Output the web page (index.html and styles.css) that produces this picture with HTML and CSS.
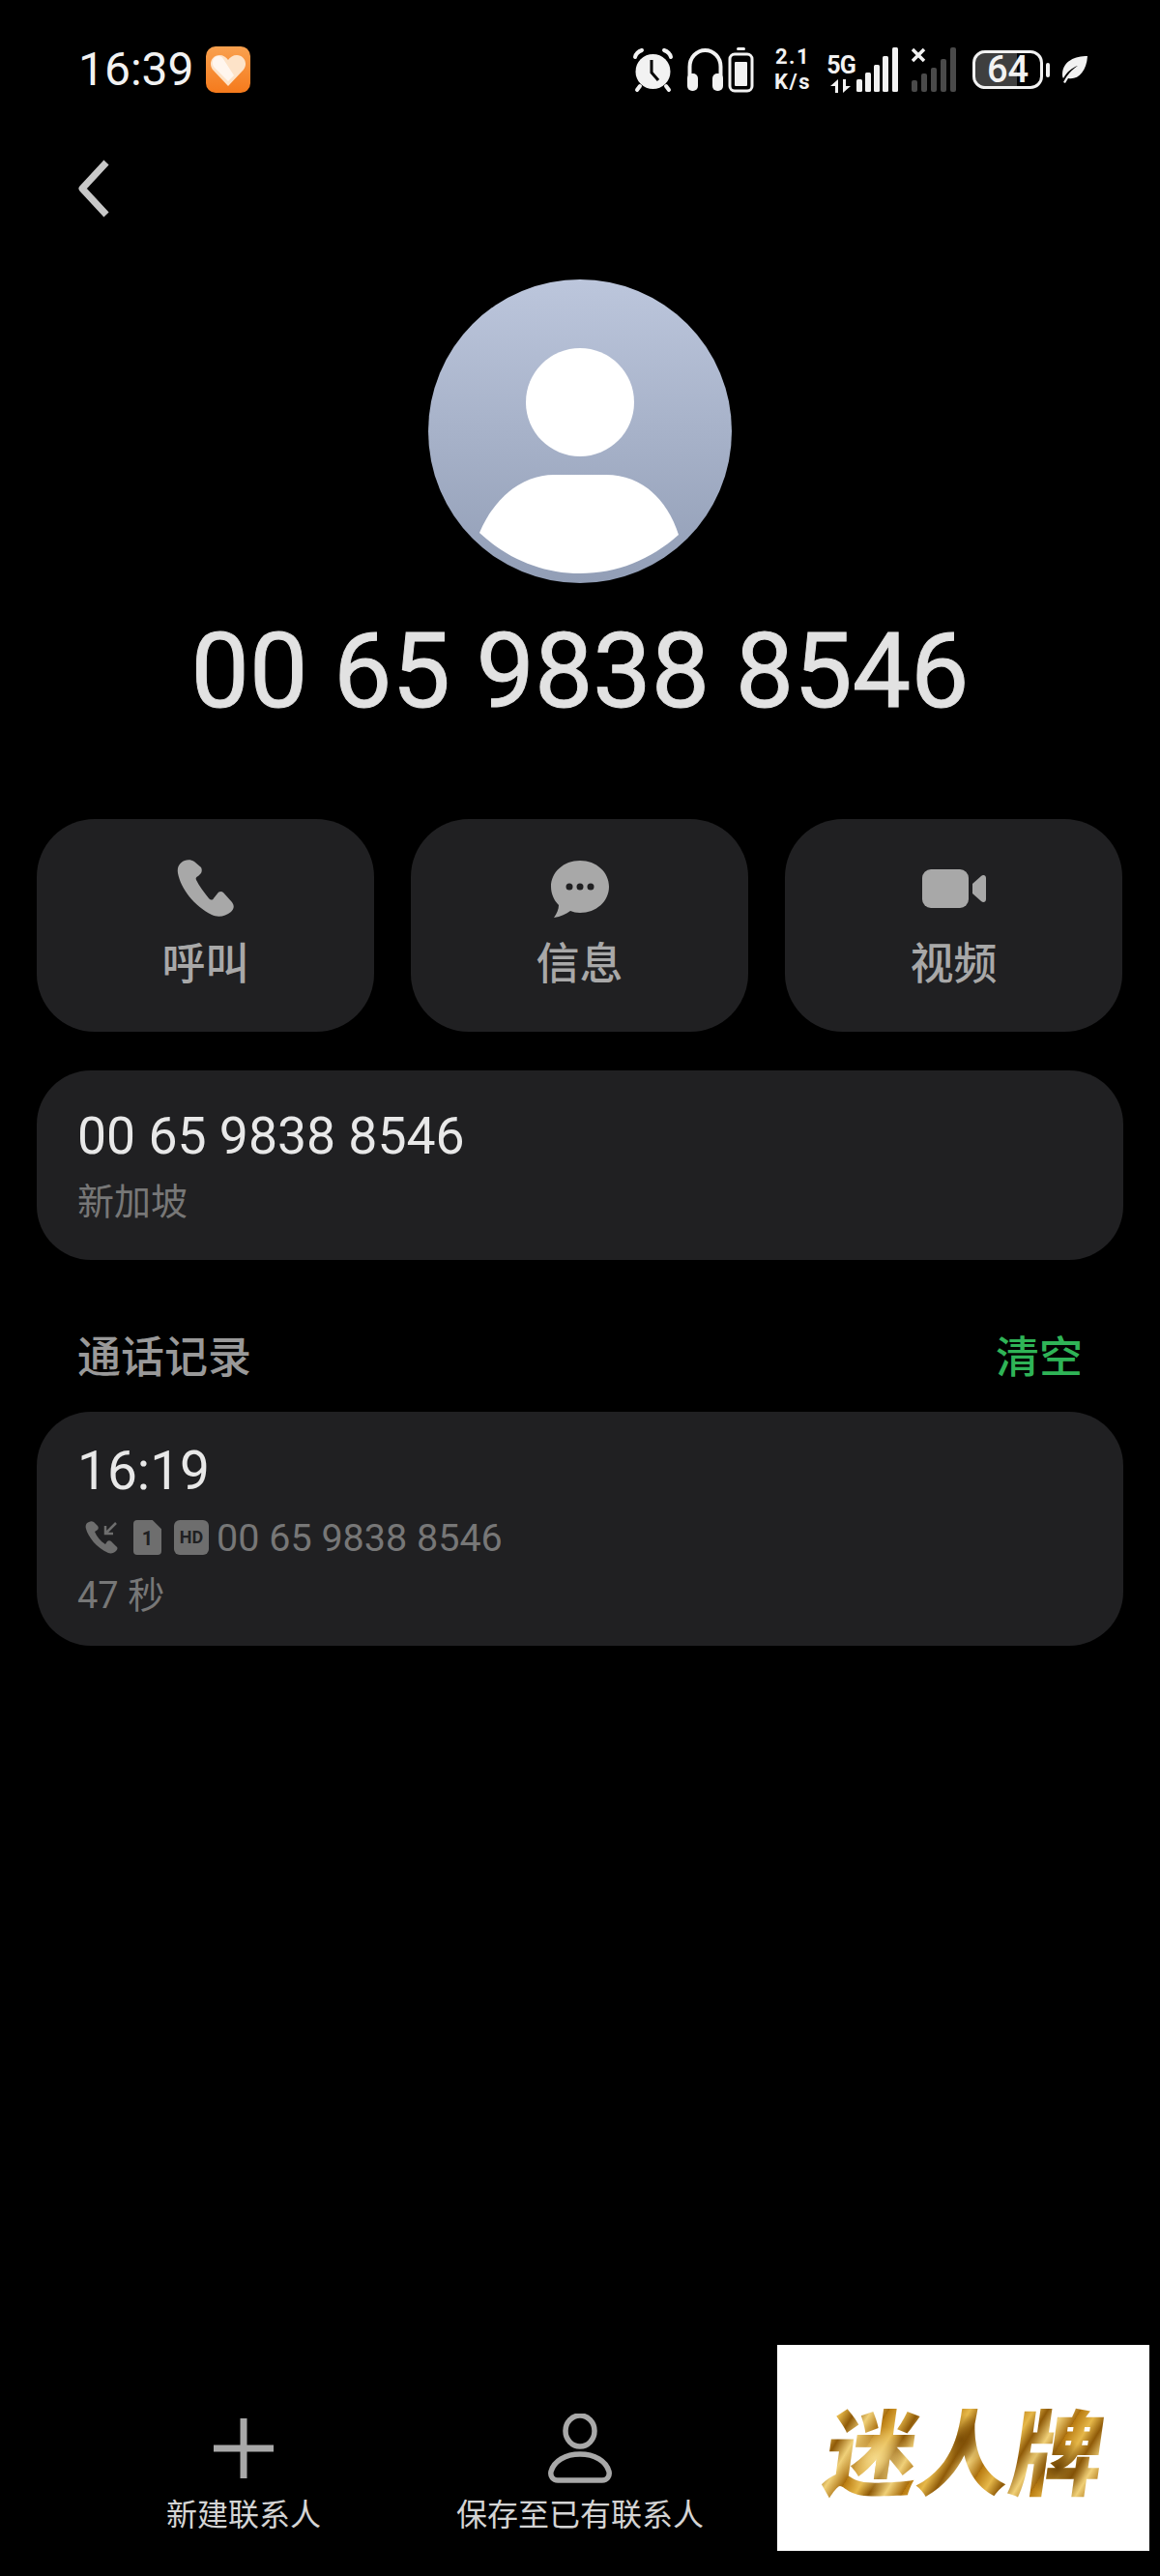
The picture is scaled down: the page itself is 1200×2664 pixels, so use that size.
FILE: index.html
```html
<!DOCTYPE html>
<html lang="zh-CN">
<head>
    <meta charset="UTF-8">
    <meta name="viewport" content="width=device-width, initial-scale=1.0">
    <title>通话详情</title>
    <link rel="stylesheet" href="styles.css">
</head>
<body>
    <div class="screen">

        <!-- Status bar -->
        <div class="status-bar">
            <div class="status-left">
                <span class="clock">16:39</span>
                <svg class="health-icon" width="46" height="48" viewBox="0 0 46 48">
                    <defs>
                        <linearGradient id="healthBg" x1="0" y1="0" x2="0" y2="1">
                            <stop offset="0" stop-color="#f9a14f"/>
                            <stop offset="1" stop-color="#f57a1c"/>
                        </linearGradient>
                    </defs>
                    <rect width="46" height="48" rx="10" fill="url(#healthBg)"/>
                    <path d="M23 41 L7 24 C2 17 7 9 14 9 C18 9 21 11 23 14 C25 11 28 9 32 9 C39 9 44 17 39 24 Z" fill="#fde3c8"/>
                    <path d="M13 10 C8 10 5 16 8 21 L23 36 L29 30 L18 13 C17 11 15 10 13 10 Z" fill="#fff6ee"/>
                </svg>
            </div>
            <div class="status-right">
                <svg class="ic-alarm" width="43" height="47" viewBox="0 0 43 47">
                    <path d="M3 10 C4 6 7 4 10 3 M40 10 C39 6 36 4 33 3" fill="none" stroke="#f2f2f2" stroke-width="4" stroke-linecap="round"/>
                    <circle cx="21.5" cy="25" r="18" fill="#f2f2f2"/>
                    <path d="M20 13 V26 L27 34" fill="none" stroke="#000" stroke-width="3"/>
                    <path d="M8 40 L5 44 M35 40 L38 44" stroke="#f2f2f2" stroke-width="4" stroke-linecap="round"/>
                </svg>
                <svg class="ic-phones" width="39" height="47" viewBox="0 0 39 47">
                    <path d="M3.5 32 V20 a16 17 0 0 1 32 0 V32" fill="none" stroke="#f2f2f2" stroke-width="4"/>
                    <rect x="1" y="27" width="11" height="18" rx="5" fill="#f2f2f2"/>
                    <rect x="27" y="27" width="11" height="18" rx="5" fill="#f2f2f2"/>
                </svg>
                <svg class="ic-cell" width="27" height="47" viewBox="0 0 27 47">
                    <rect x="9" y="0" width="9" height="3" rx="1.5" fill="#f2f2f2"/>
                    <rect x="2" y="7" width="23" height="38" rx="5" fill="none" stroke="#f2f2f2" stroke-width="3"/>
                    <rect x="7" y="15" width="13" height="25" rx="1" fill="#f2f2f2"/>
                </svg>
                <div class="net-speed"><div>2.1</div><div>K/s</div></div>
                <div class="sim-one">
                    <div class="sim-type">
                        <div>5G</div>
                        <svg width="22" height="14" viewBox="0 0 22 14">
                            <path d="M8 0 V14 H5 V7 H0 Z M13 14 V0 H16 V7 H21 Z" fill="#f2f2f2"/>
                        </svg>
                    </div>
                    <svg width="44" height="47" viewBox="0 0 44 47">
                        <rect x="0" y="33" width="6" height="13" rx="1.5" fill="#f2f2f2"/>
                        <rect x="9" y="26" width="6" height="20" rx="1.5" fill="#f2f2f2"/>
                        <rect x="18" y="18" width="6" height="28" rx="1.5" fill="#f2f2f2"/>
                        <rect x="27" y="9" width="6" height="37" rx="1.5" fill="#f2f2f2"/>
                        <rect x="37" y="0" width="6" height="46" rx="1.5" fill="#f2f2f2"/>
                    </svg>
                </div>
                <svg class="ic-sim-two" width="47" height="47" viewBox="0 0 47 47">
                    <path d="M1 2 L13 14 M13 2 L1 14" stroke="#f2f2f2" stroke-width="3.5"/>
                    <rect x="0" y="34" width="6" height="12" rx="2" fill="#4a4a4a"/>
                    <rect x="10" y="27" width="6" height="19" rx="2" fill="#4a4a4a"/>
                    <rect x="20" y="21" width="6" height="25" rx="2" fill="#4a4a4a"/>
                    <rect x="30" y="12" width="6" height="34" rx="2" fill="#4a4a4a"/>
                    <rect x="40" y="0" width="6" height="46" rx="2" fill="#4a4a4a"/>
                </svg>
                <div class="battery">
                    <div class="battery-body">64</div>
                    <div class="battery-nub"></div>
                </div>
                <svg class="ic-leaf" width="28" height="30" viewBox="0 0 28 30">
                    <path d="M28 1 C15 1 3 6 2 19 C2 21 2 23 3 24 C7 17 12 13 18 11 C12 15 7 20 3 28 L5 29 C6 27 7 26 8 24 C18 26 27 17 28 1 Z" fill="#f2f2f2"/>
                </svg>
            </div>
        </div>

        <!-- Back arrow -->
        <svg class="back" width="34" height="60" viewBox="0 0 34 60">
            <path d="M30 3 L5 30 L30 57" fill="none" stroke="#c8c8c8" stroke-width="7" stroke-linejoin="round"/>
        </svg>

        <!-- Avatar and number -->
        <svg class="avatar" width="314" height="314" viewBox="0 0 314 314">
            <defs>
                <linearGradient id="avatarBg" x1="0" y1="0" x2="0" y2="1">
                    <stop offset="0" stop-color="#bcc6dc"/>
                    <stop offset="1" stop-color="#929eb6"/>
                </linearGradient>
            </defs>
            <circle cx="157" cy="157" r="157" fill="url(#avatarBg)"/>
            <circle cx="157" cy="127" r="56" fill="#fff"/>
            <path d="M53 262 C70 222 100 202 130 202 H184 C218 202 246 224 259 264 C230 290 195 304 157 304 C118 304 82 289 53 262 Z" fill="#fff"/>
        </svg>
        <h1 class="caller">00 65 9838 8546</h1>

        <!-- Call, message, video -->
        <div class="actions">
            <div class="action-card">
                <svg width="60" height="60" viewBox="0 0 60 60">
                    <path d="M8 1 C3 3 0 7 1 14 C4 30 18 48 36 57 C42 60 50 59 56 54 C60 50 59 47 57 44 L48 34 C46 32 43 33 42 35 L38 40 C37 42 35 42 33 40 C28 34 23 27 20 21 C19 19 20 18 22 17 L25 14 C26 12 26 10 25 8 L18 2 C15 0 11 0 8 1 Z" fill="#a8a8a8"/>
                </svg>
                <span>呼叫</span>
            </div>
            <div class="action-card">
                <svg width="62" height="60" viewBox="0 0 62 60">
                    <path d="M31 1 C48 1 61 13 61 28 C61 43 48 55 31 55 C27 55 24 54 21 53 C17 56 11 59 4 60 C7 56 9 51 9 47 C4 42 1 35 1 28 C1 13 14 1 31 1 Z" fill="#a8a8a8"/>
                    <circle cx="20" cy="28" r="3.5" fill="#202022"/>
                    <circle cx="31" cy="28" r="3.5" fill="#202022"/>
                    <circle cx="42" cy="28" r="3.5" fill="#202022"/>
                </svg>
                <span>信息</span>
            </div>
            <div class="action-card">
                <svg width="66" height="60" viewBox="0 0 66 60">
                    <rect x="0" y="10" width="48" height="40" rx="9" fill="#a8a8a8"/>
                    <path d="M52 25 L61 17 C63 15 66 16 66 19 V41 C66 44 63 45 61 43 L52 35 Z" fill="#a8a8a8"/>
                </svg>
                <span>视频</span>
            </div>
        </div>

        <!-- Number card -->
        <div class="card number-card">
            <div class="number">00 65 9838 8546</div>
            <div class="region">新加坡</div>
        </div>

        <!-- Call log -->
        <div class="log-header">
            <span class="log-title">通话记录</span>
            <span class="log-clear">清空</span>
        </div>
        <div class="card log-card">
            <div class="log-time">16:19</div>
            <div class="log-detail">
                <svg width="36" height="36" viewBox="0 0 36 36">
                    <path d="M4 2 C1 3 0 6 1 9 C3 17 12 29 24 34 C27 35 30 34 32 32 C34 30 34 28 32 27 L27 22 C26 21 24 21 23 22 L21 25 C16 22 12 17 10 12 L13 10 C14 9 14 7 13 6 L9 2 C7 1 6 1 4 2 Z" fill="#6e6e6e"/>
                    <path d="M32 3 L21 14 M21 6 V14 H29" fill="none" stroke="#6e6e6e" stroke-width="2.5"/>
                </svg>
                <div class="sim-badge">1</div>
                <div class="hd-badge">HD</div>
                <span class="log-number">00 65 9838 8546</span>
            </div>
            <div class="log-length">47 秒</div>
        </div>

        <!-- Bottom actions -->
        <div class="bottom-bar">
            <div class="bottom-item">
                <svg width="62" height="72" viewBox="0 0 62 72">
                    <path d="M31 5 V67 M0 36 H62" stroke="#a8a8a8" stroke-width="7"/>
                </svg>
                <span>新建联系人</span>
            </div>
            <div class="bottom-item">
                <svg width="66" height="72" viewBox="0 0 66 72">
                    <ellipse cx="33" cy="18" rx="15" ry="16" fill="none" stroke="#a8a8a8" stroke-width="5.5"/>
                    <path d="M10 69 H56 C61 69 64 65 63 60 C60 49 48 42 33 42 C18 42 6 49 3 60 C2 65 5 69 10 69 Z" fill="none" stroke="#a8a8a8" stroke-width="5.5"/>
                </svg>
                <span>保存至已有联系人</span>
            </div>
        </div>

        <!-- Watermark stuck over the third bottom action -->
        <div class="watermark"><span class="gold-text">迷人牌</span></div>
    </div>
</body>
</html>
```

FILE: styles.css
```css
/* Basic Reset */
* {
    margin: 0;
    padding: 0;
    box-sizing: border-box;
}

body {
    background-color: #000;
    font-family: 'Roboto', 'Noto Sans CJK SC', sans-serif;
}

.screen {
    position: relative;
    width: 1200px;
    height: 2664px;
    display: flex;
    flex-direction: column;
    overflow: hidden;
}

/* Status bar */
.status-bar {
    display: flex;
    justify-content: space-between;
    align-items: center;
    height: 48px;
    margin-top: 48px;
    padding: 0 75px 0 81px;
    color: #f2f2f2;
}

.status-left {
    display: flex;
    align-items: center;
    gap: 12px;
}

.clock {
    font-size: 48px;
    line-height: 48px;
}

.status-right {
    display: flex;
    align-items: center;
}

.ic-phones {
    margin-left: 13px;
}

.ic-cell {
    margin-left: 4px;
}

.net-speed {
    display: flex;
    flex-direction: column;
    align-items: center;
    width: 46px;
    margin-left: 17px;
    font-size: 22px;
    font-weight: 700;
    letter-spacing: 1.5px;
    line-height: 26px;
}

.sim-one {
    display: flex;
    gap: 3px;
    margin-left: 14px;
    align-items: flex-end;
}

.sim-type {
    display: flex;
    flex-direction: column;
    align-items: center;
    width: 26px;
    font-size: 25px;
    font-weight: 700;
    line-height: 28px;
    letter-spacing: -1px;
}

.ic-sim-two {
    margin-left: 13px;
}

.battery {
    display: flex;
    align-items: center;
    gap: 3px;
    margin-left: 16px;
}

.battery-body {
    width: 73px;
    height: 40px;
    border: 3px solid #f2f2f2;
    border-radius: 13px;
    background: linear-gradient(90deg, #3f3f3f 64%, #000 64%);
    background-clip: padding-box;
    font-size: 38px;
    font-weight: 500;
    line-height: 34px;
    text-align: center;
}

.battery-nub {
    width: 4px;
    height: 15px;
    border-radius: 2px;
    background-color: #f2f2f2;
}

.ic-leaf {
    margin-left: 11px;
}

/* Back and header */
.back {
    margin: 69px 0 0 80px;
    flex-shrink: 0;
}

.avatar {
    margin: 64px auto 0;
    flex-shrink: 0;
}

.caller {
    margin-top: 36px;
    font-size: 107.5px;
    font-weight: 400;
    -webkit-text-stroke: 1px #e2e2e2;
    line-height: 110px;
    text-align: center;
    color: #e2e2e2;
}

/* Action cards */
.actions {
    display: grid;
    grid-template-columns: repeat(3, 349px);
    column-gap: 38px;
    margin: 98px 38px 0;
}

.action-card {
    height: 220px;
    padding-top: 42px;
    display: flex;
    flex-direction: column;
    align-items: center;
    gap: 19px;
    background-color: #202022;
    border-radius: 60px;
    color: #a8a8a8;
    font-size: 45px;
    font-weight: 500;
    line-height: 60px;
}

.card {
    margin: 0 38px;
    background-color: #202022;
    border-radius: 56px;
    padding-left: 42px;
}

/* Number card */
.number-card {
    height: 196px;
    margin-top: 40px;
    padding-top: 33px;
}

.number {
    font-size: 53.5px;
    line-height: 70px;
    color: #e8e8e8;
}

.region {
    margin-top: 8px;
    font-size: 38px;
    line-height: 50px;
    color: #777;
}

/* Call log */
.log-header {
    display: flex;
    justify-content: space-between;
    margin-top: 72px;
    padding: 0 80px;
    font-size: 45px;
    font-weight: 500;
    line-height: 60px;
}

.log-title {
    color: #999;
}

.log-clear {
    color: #2fb457;
}

.log-card {
    height: 242px;
    margin-top: 25px;
    padding-top: 28px;
}

.log-time {
    font-size: 55px;
    line-height: 66px;
    color: #e8e8e8;
}

.log-detail {
    display: flex;
    align-items: center;
    margin-top: 12px;
    height: 48px;
    padding-left: 8px;
    color: #777;
}

.sim-badge {
    width: 29px;
    height: 36px;
    margin-left: 14px;
    background-color: #6e6e6e;
    border-radius: 4px;
    clip-path: polygon(0 0, 68% 0, 100% 26%, 100% 100%, 0 100%);
    color: #202022;
    font-size: 20px;
    font-weight: 700;
    line-height: 38px;
    text-align: center;
}

.hd-badge {
    width: 36px;
    height: 36px;
    margin-left: 13px;
    background-color: #6e6e6e;
    border-radius: 6px;
    color: #202022;
    font-size: 18px;
    font-weight: 700;
    line-height: 36px;
    text-align: center;
}

.log-number {
    margin-left: 8px;
    font-size: 39.5px;
}

.log-length {
    margin-top: 12px;
    font-size: 38px;
    line-height: 48px;
    color: #777;
}

/* Bottom bar */
.bottom-bar {
    display: grid;
    grid-template-columns: repeat(3, 348px);
    margin: auto 0 43px 78px;
}

.bottom-item {
    display: flex;
    flex-direction: column;
    align-items: center;
    gap: 13px;
    color: #d4d4d4;
    font-size: 32px;
    line-height: 40px;
}

/* Watermark */
.watermark {
    position: absolute;
    left: 804px;
    top: 2425px;
    width: 385px;
    height: 213px;
    display: flex;
    align-items: center;
    justify-content: center;
    padding-left: 4px;
    background-color: #fff;
}

.gold-text {
    display: block;
    font-family: 'Noto Sans CJK SC', sans-serif;
    font-size: 96px;
    font-weight: 900;
    line-height: 110px;
    transform: skewX(-8deg);
    background:
        radial-gradient(circle at 18% 60%, #f4d98a 0, rgba(244, 217, 138, 0) 34px),
        radial-gradient(circle at 48% 42%, #7d4e06 0, rgba(125, 78, 6, 0) 26px),
        radial-gradient(circle at 84% 68%, #6f4505 0, rgba(111, 69, 5, 0) 30px),
        repeating-linear-gradient(115deg, #b87a10 0, #e6b84a 16px, #8f5a08 29px, #f0d078 44px, #a86c0c 60px);
    -webkit-background-clip: text;
    background-clip: text;
    color: transparent;
}
```
